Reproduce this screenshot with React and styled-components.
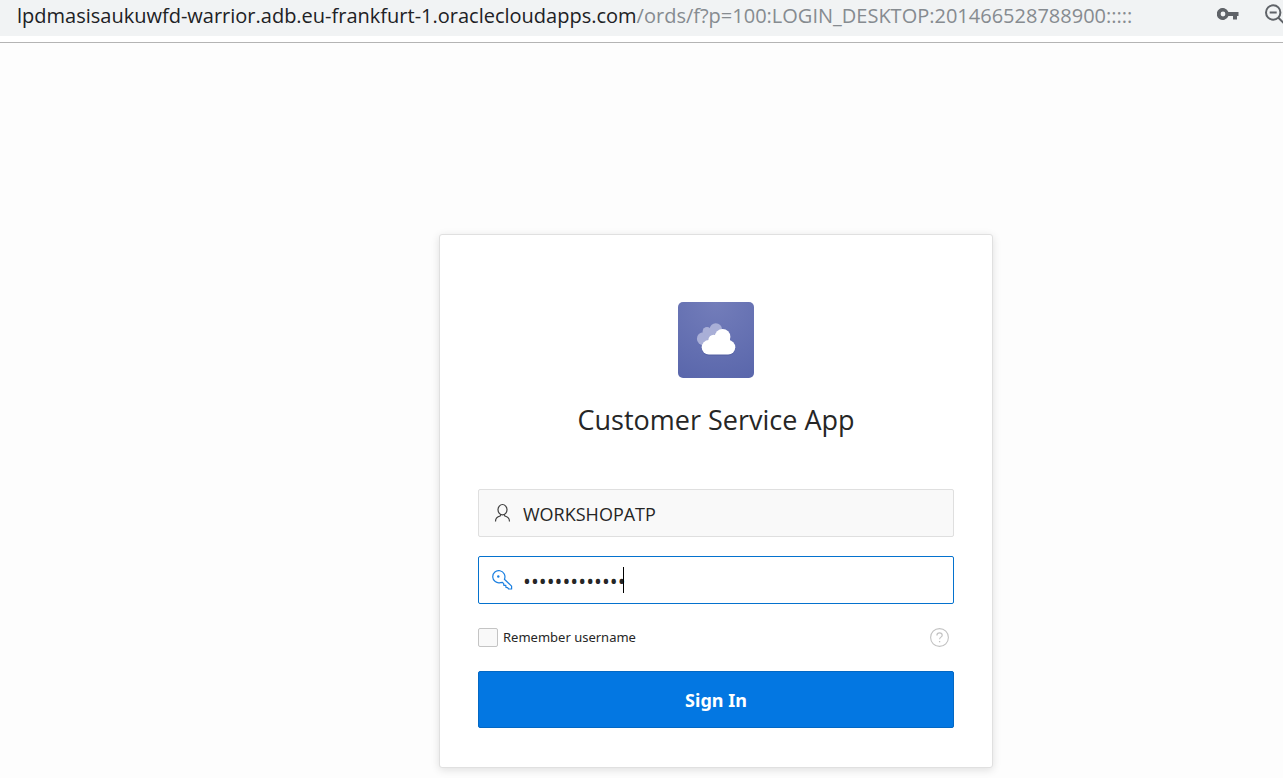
import React from "react";
import styled, { createGlobalStyle } from "styled-components";

const GlobalStyle = createGlobalStyle`
  *, *::before, *::after { box-sizing: border-box; }
  body {
    margin: 0;
    background: #fdfdfd;
    color: #262626;
    font-family: "Segoe UI", "Open Sans", "Noto Sans", sans-serif;
    overflow-x: hidden;
  }
`;

const AddressBar = styled.header`
  display: flex;
  align-items: center;
  justify-content: space-between;
  height: 43px;
  padding: 0 0 10px 17px;
  background: linear-gradient(#f1f3f4 36px, #fff 36px);
  border-bottom: 1px solid #b4b4b4;
  overflow: hidden;
`;

const Address = styled.a`
  color: #868b90;
  font-size: 20px;
  line-height: 32px;
  white-space: nowrap;
  text-decoration: none;
`;

const Host = styled.span`
  color: #202124;
`;

const BarTools = styled.div`
  display: flex;
  flex: none;
  align-items: center;
  gap: 26px;
  margin: 0 -6px 2px 0;
`;

const IconButton = styled.button`
  display: flex;
  padding: 0;
  border: 0;
  background: none;
  color: ${({ $color }) => $color};
`;

const Main = styled.main`
  display: flex;
  justify-content: center;
  padding: 191px 0 10px 149px;
`;

const Card = styled.form`
  display: flex;
  flex-direction: column;
  width: 554px;
  max-width: 100%;
  padding: 67px 38px 39px;
  background: #fff;
  border: 1px solid #e0e0e0;
  border-radius: 3px;
  box-shadow: 0 2px 8px rgba(0, 0, 0, 0.12);
`;

const Logo = styled.div`
  align-self: center;
  width: 76px;
  height: 76px;
  border-radius: 5px;
  overflow: hidden;
  background: radial-gradient(circle at 50% 0, #737dba, #5966ab);
`;

const Title = styled.h1`
  margin: 21px 0 48px;
  font-size: 27px;
  font-weight: 400;
  line-height: 42px;
  text-align: center;
`;

const Field = styled.label`
  display: flex;
  align-items: center;
  gap: 10px;
  height: 48px;
  margin-bottom: 19px;
  padding: 0 13px;
  border: 1px solid ${({ $active }) => ($active ? "#0572ce" : "#dfdfdf")};
  border-radius: 2px;
  background: ${({ $active }) => ($active ? "#fff" : "#f9f9f9")};
  color: ${({ $active }) => ($active ? "#1a7fe0" : "#404040")};
`;

const Entry = styled.span`
  position: relative;
  flex: 1;
  display: flex;
`;

const TextInput = styled.input`
  flex: 1;
  min-width: 0;
  height: 26px;
  padding: 2px 0 0;
  border: 0;
  outline: 0;
  background: none;
  color: #262626;
  font-family: inherit;
  font-size: ${({ $size }) => $size};
  line-height: 24px;
`;

const Caret = styled.span`
  position: absolute;
  top: 0;
  left: 100px;
  width: 1px;
  height: 26px;
  background: #000;
`;

const Options = styled.div`
  display: flex;
  align-items: center;
  justify-content: space-between;
  height: 29px;
  margin: 0 5px 19px 0;
`;

const Remember = styled.label`
  display: flex;
  align-items: center;
  gap: 5px;
  font-family: "Segoe UI", "Noto Sans", sans-serif;
  font-size: 13px;
  line-height: 21px;
`;

const Checkbox = styled.input`
  appearance: none;
  width: 20px;
  height: 19px;
  margin: 0;
  border: 1px solid #c4c4c4;
  border-radius: 2px;
  background: #f9f9f9;
`;

const SignIn = styled.button`
  height: 57px;
  border: 1px solid #0368c4;
  border-radius: 2px;
  background: #0377e2;
  color: #fff;
  font-family: "Segoe UI", "Noto Sans", sans-serif;
  font-size: 18px;
  font-weight: 700;
  line-height: 24px;
`;

const CloudLogo = () => (
  <svg width="76" height="76" viewBox="0 0 76 76" aria-hidden="true">
    <g fill="#a9afd7">
      <circle cx="25.4" cy="36.7" r="6.5" />
      <circle cx="29" cy="29.4" r="4.4" />
      <circle cx="37.8" cy="27.4" r="6.2" />
      <path d="M25 29h19v8H28z" />
    </g>
    <g fill="#4b5799" opacity=".5" transform="translate(0 1)">
      <rect x="23.7" y="38.3" width="33.6" height="14.4" rx="7.2" />
    </g>
    <g fill="#fff">
      <rect x="23.7" y="38.1" width="33.6" height="14.4" rx="7.2" />
      <circle cx="44.6" cy="34.8" r="7.8" />
      <circle cx="35.6" cy="38" r="5.2" />
      <path d="M31 37h21v5H31z" />
    </g>
  </svg>
);

const BarKeyIcon = () => (
  <svg width="22" height="14" viewBox="0 0 22 14" aria-hidden="true">
    <path
      fill="currentColor"
      fillRule="evenodd"
      d="M11.4 4A6 6 0 1 0 11.4 8H16v3.6h4V8h1.5V4zM6 8.4A2.4 2.4 0 1 1 6 3.6a2.4 2.4 0 0 1 0 4.8z"
    />
  </svg>
);

const ZoomOutIcon = () => (
  <svg width="24" height="24" viewBox="0 0 24 24" fill="none" stroke="currentColor" strokeWidth="2" aria-hidden="true">
    <circle cx="8.2" cy="9.5" r="7.2" />
    <path d="M4.7 9.5h7M13.4 14.7l6 6" />
  </svg>
);

const UserIcon = () => (
  <svg width="21" height="20" viewBox="0 0 21 20" fill="none" stroke="currentColor" strokeWidth="1.2" aria-hidden="true">
    <ellipse cx="10.5" cy="6.7" rx="4.5" ry="5.2" />
    <path d="M3.5 18.5c0-3.6 1.5-4.8 4.7-5.5l.6-1.6M17.5 18.5c0-3.6-1.5-4.8-4.7-5.5l-.6-1.6" />
  </svg>
);

const KeyIcon = () => (
  <svg width="21" height="20" viewBox="0 0 21 20" fill="none" stroke="currentColor" strokeWidth="1.2" strokeLinejoin="round" aria-hidden="true">
    <path d="M12.4 9.2a6.1 6.1 0 1 0-4 3.4l2.1-.2 1.2 1.2.1 1.7 2 .1.2 2.1 1.5.1 1.2 1.4h2.9v-2.9z" />
    <circle cx="6.3" cy="6.5" r="1.2" fill="currentColor" stroke="none" />
  </svg>
);

const HelpIcon = () => (
  <svg width="19" height="19" viewBox="0 0 19 19" fill="none" stroke="currentColor" aria-hidden="true">
    <circle cx="9.5" cy="9.5" r="8.9" strokeWidth="1.1" />
    <path d="M6.9 7.4c0-3.4 5.3-3.2 5.3-.2 0 2-2.6 1.9-2.6 4" strokeWidth="1.2" />
    <path d="M9.6 13v1.3" strokeWidth="1.3" />
  </svg>
);

export default function App() {
  return (
    <>
      <GlobalStyle />
      <AddressBar>
        <Address href="#">
          <Host>lpdmasisaukuwfd-warrior.adb.eu-frankfurt-1.oraclecloudapps.com</Host>
          /ords/f?p=100:LOGIN_DESKTOP:201466528788900:::::
        </Address>
        <BarTools>
          <IconButton type="button" $color="#5f6368" aria-label="Saved passwords">
            <BarKeyIcon />
          </IconButton>
          <IconButton type="button" $color="#5f6368" aria-label="Zoom out">
            <ZoomOutIcon />
          </IconButton>
        </BarTools>
      </AddressBar>
      <Main>
        <Card onSubmit={(event) => event.preventDefault()}>
          <Logo>
            <CloudLogo />
          </Logo>
          <Title>Customer Service App</Title>
          <Field>
            <UserIcon />
            <Entry>
              <TextInput $size="18px" type="text" aria-label="Username" defaultValue="WORKSHOPATP" />
            </Entry>
          </Field>
          <Field $active>
            <KeyIcon />
            <Entry>
              <TextInput $size="21px" type="password" aria-label="Password" defaultValue="workshoppass1" />
              <Caret />
            </Entry>
          </Field>
          <Options>
            <Remember>
              <Checkbox type="checkbox" />
              Remember username
            </Remember>
            <IconButton type="button" $color="#c2c2c2" aria-label="Help">
              <HelpIcon />
            </IconButton>
          </Options>
          <SignIn type="submit">Sign In</SignIn>
        </Card>
      </Main>
    </>
  );
}
